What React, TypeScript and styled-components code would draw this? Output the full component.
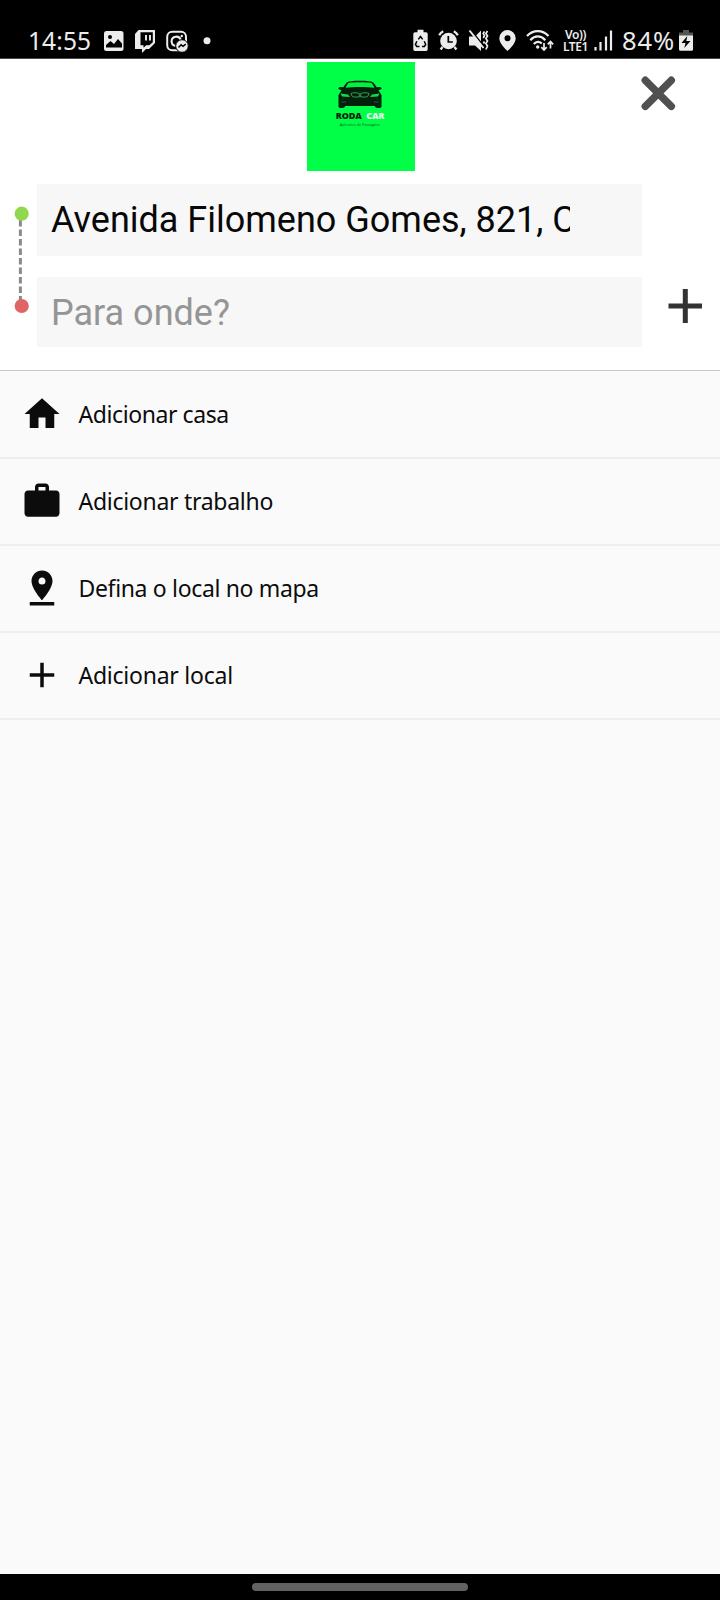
import React from "react";
import styled, { createGlobalStyle } from "styled-components";
import { MdAdd, MdHome, MdPinDrop, MdWork } from "react-icons/md";

const GlobalStyle = createGlobalStyle`
  * { box-sizing: border-box; }
  body { margin: 0; background: #fafafa; }
`;

const Screen = styled.div`
  width: 720px;
  height: 1600px;
  display: flex;
  flex-direction: column;
  overflow: hidden;
  background: #fafafa;
  font-family: "Noto Sans", sans-serif;
`;

const StatusBar = styled.header`
  height: 59px;
  flex: none;
  display: flex;
  align-items: flex-start;
  justify-content: space-between;
  padding: 29px 27px 0 28px;
  border-bottom: 1px solid #4a4a4a;
  background: #000;
  color: #ececec;
`;

const StatusGroup = styled.div`
  display: flex;
  height: 24px;
`;

const StatusText = styled.span<{ $size: number; $width: number; $spacing?: number; $inset?: number }>`
  width: ${(p) => p.$width}px;
  padding-left: ${(p) => p.$inset ?? 0}px;
  font-size: ${(p) => p.$size}px;
  line-height: 23px;
  letter-spacing: ${(p) => p.$spacing ?? 0}px;
  white-space: nowrap;
`;

const StatusGlyph = styled.svg<{ $gap?: number }>`
  display: block;
  flex: none;
  height: 24px;
  margin-left: ${(p) => p.$gap ?? 0}px;
`;

const Network = styled.div`
  width: 27px;
  margin-left: 8px;
  display: flex;
  flex-direction: column;
  align-items: center;
  font-size: 12px;
  font-weight: 600;
  line-height: 12px;
  letter-spacing: -0.4px;
  white-space: nowrap;
`;

const SearchPanel = styled.section`
  height: 312px;
  flex: none;
  background: #fff;
  border-bottom: 1px solid #c8c8c8;
`;

const BrandRow = styled.div`
  height: 125px;
  display: grid;
  grid-template-columns: 307px 108px 1fr;
  padding-top: 3px;
`;

const Logo = styled.div`
  grid-column: 2;
  height: 109px;
  display: flex;
  flex-direction: column;
  align-items: center;
  padding: 18px 14px 0 12px;
  background: #00ff46;
  font-family: "Open Sans", sans-serif;
`;

const LogoName = styled.div`
  margin-top: 1px;
  font-size: 9px;
  font-weight: 800;
  line-height: 12px;
  letter-spacing: -0.1px;
  white-space: pre;
  color: #04240b;
  span { color: #e4ffe9; }
`;

const LogoTagline = styled.div`
  font-size: 3.6px;
  line-height: 5px;
  white-space: nowrap;
  color: #05651f;
`;

const CloseButton = styled.button`
  justify-self: end;
  width: 36px;
  height: 36px;
  margin: 13px 44px 0 0;
  padding: 0;
  border: 0;
  background: none;
`;

const Trip = styled.div`
  display: grid;
  grid-template-columns: 36.5px 605.5px 1fr;
`;

const Route = styled.div`
  height: 164px;
  svg { display: block; }
`;

const Fields = styled.div`
  display: flex;
  flex-direction: column;
  gap: 21px;
`;

const Field = styled.div<{ $height: number; $placeholder?: boolean }>`
  height: ${(p) => p.$height}px;
  padding: ${(p) => (p.$placeholder ? 1 : 0)}px 0 0 14.5px;
  display: flex;
  align-items: center;
  background: #f7f7f7;
  color: ${(p) => (p.$placeholder ? "#959595" : "#080808")};
  font-family: Roboto, sans-serif;
  font-size: 36px;
  line-height: 44px;
`;

const FieldText = styled.span`
  width: 519px;
  overflow: hidden;
  white-space: nowrap;
`;

const AddStop = styled.button`
  width: 34px;
  height: 34px;
  margin: 105px 0 0 26px;
  padding: 0;
  border: 0;
  background: none;
`;

const Options = styled.nav`
  flex: 1;
  padding-top: 1px;
`;

const Option = styled.div`
  height: 87px;
  display: flex;
  align-items: center;
  padding: 0 0 1px 21px;
  border-bottom: 2px solid #eeeeee;
  color: #0c0c0c;
  font-size: 23px;
  svg { flex: none; }
`;

const OptionLabel = styled.span<{ $spacing: number }>`
  margin-left: 15.5px;
  padding-bottom: 1px;
  letter-spacing: ${(p) => p.$spacing}px;
  line-height: 32px;
  white-space: nowrap;
`;

const NavBar = styled.footer`
  height: 26px;
  flex: none;
  display: flex;
  justify-content: center;
  padding-top: 9px;
  background: #000;
`;

const NavHandle = styled.div`
  width: 216px;
  height: 8px;
  border-radius: 4px;
  background: #626262;
`;

const options = [
  { label: "Adicionar casa", Icon: MdHome, spacing: -0.42 },
  { label: "Adicionar trabalho", Icon: MdWork, spacing: -0.28 },
  { label: "Defina o local no mapa", Icon: MdPinDrop, spacing: -0.34 },
  { label: "Adicionar local", Icon: MdAdd, spacing: -0.24 },
];

function Notifications() {
  return (
    <StatusGroup>
      <StatusText $size={24.5} $width={76} $spacing={0.1}>14:55</StatusText>
      <StatusGlyph width="20" viewBox="0 0 20 24" fill="none">
        <rect x="0" y="2" width="19.5" height="20" rx="2.5" fill="#ececec" />
        <circle cx="6" cy="8" r="2" fill="#000" />
        <path d="M2 18.5V16l4.5-4 3.5 3 4-5 4 4.5v4z" fill="#000" />
      </StatusGlyph>
      <StatusGlyph $gap={11} width="21" viewBox="0 0 21 24">
        <path d="M3.5 1H20v13l-6 6h-3l-4 4v-4H0V5z" fill="#ececec" />
        <path d="M5.5 3.2h12.3v10l-3.5 3h-3.1l-2.7 2.6v-2.6h-3z" fill="#000" />
        <path d="M11 6v5.500M15 6v5.500" stroke="#ececec" strokeWidth="1.900" />
      </StatusGlyph>
      <StatusGlyph $gap={10} width="23" viewBox="0 0 23 24" fill="none" stroke="#ececec">
        <rect x="1.2" y="2.7" width="18.8" height="18.5" rx="5" strokeWidth="2" />
        <path d="M14.8 11a4.7 4.7 0 1 0-5.2 6" strokeWidth="2.1" />
        <circle cx="15.8" cy="7" r="1.2" fill="#ececec" stroke="none" />
        <circle cx="16" cy="17" r="6.3" fill="#ececec" stroke="#000" strokeWidth="1" />
        <path d="M12.5 18.5l2.6-2.7 2 1.5 2.6-2.2" stroke="#000" strokeWidth="1.5" />
      </StatusGlyph>
      <StatusGlyph $gap={14} width="8" viewBox="0 0 8 24">
        <circle cx="4" cy="11.700" r="3.500" fill="#ececec" />
      </StatusGlyph>
    </StatusGroup>
  );
}

function SystemStatus() {
  return (
    <StatusGroup>
      <StatusGlyph width="15" viewBox="0 0 15 24">
        <path d="M4.500.8h6v2.400H13a1.700 1.700 0 0 1 1.700 1.700v15.300A1.700 1.700 0 0 1 13 22H2A1.700 1.700 0 0 1 .3 20.200V4.900A1.700 1.700 0 0 1 2 3.200h2.500z" fill="#ececec" />
        <path d="M5.300 10.400 7.500 7.500l2.200 2.900M11.200 12.200l1.500 3.200-1.300 2H9M6.500 17.400H3.700l-1.300-2 1.500-3.200" fill="none" stroke="#000" strokeWidth="1.500" />
      </StatusGlyph>
      <StatusGlyph $gap={10} width="21" viewBox="0 0 21 24" fill="none" stroke="#ececec">
        <circle cx="10.500" cy="12" r="8.300" fill="#ececec" stroke="none" />
        <path d="M1.200 6.300a9 9 0 0 1 4-4M19.800 6.300a9 9 0 0 0-4-4M4.500 18 2.600 20.500M16.500 18l1.900 2.500" strokeWidth="2.300" />
        <path d="M10.300 7v6h4.500" stroke="#000" strokeWidth="1.700" />
      </StatusGlyph>
      <StatusGlyph $gap={9} width="21" viewBox="0 0 21 24" fill="none">
        <path d="M1 7.500h6l6-6V22L7 16.500H1z" fill="#ececec" />
        <path d="M3.200 1.500 17.200 19" stroke="#000" strokeWidth="1.700" />
        <path d="M1.500 1.500 15.500 19" stroke="#ececec" strokeWidth="2" />
        <path d="M16.500 2.500l-1.300 2 1.300 2.300-1.300 2.200M19.500 2l-1.600 2.500 1.600 2.500-1.600 2.500 1.600 2.500-1.600 2.500 1.600 2.500-1.600 3.500M16.500 12.500l-1 2" stroke="#ececec" strokeWidth="1.700" />
      </StatusGlyph>
      <StatusGlyph $gap={10} width="17" viewBox="0 0 17 24">
        <path fillRule="evenodd" d="M8.500 1A8.200 8.200 0 0 0 .3 9.200C.3 15 8.500 22 8.500 22S16.700 15 16.700 9.200A8.200 8.200 0 0 0 8.500 1zm0 5.200a3 3 0 1 1 0 6 3 3 0 0 1 0-6z" fill="#ececec" />
      </StatusGlyph>
      <StatusGlyph $gap={10} width="28" viewBox="0 0 28 24" fill="none" stroke="#ececec">
        <path d="M1 7c6-6.500 15.500-6.500 21.500 0M4.300 11.200c4.500-5 10.500-5 15 0M7.800 15c2.500-2.800 5.500-2.800 8-.5" strokeWidth="2.200" />
        <circle cx="11.700" cy="18" r="1.700" fill="#ececec" stroke="none" />
        <path d="M18 14v7m-2.700-2.800 2.700 2.800 2.700-2.800M24.500 19.500v-7m-2.700 2.800 2.700-2.800 2.700 2.800" strokeWidth="1.700" />
      </StatusGlyph>
      <Network>
        <span>Vo))</span>
        <span>LTE1</span>
      </Network>
      <StatusGlyph $gap={5} width="20" viewBox="0 0 20 24" stroke="#ececec">
        <path d="M1.500 18v3.500M6.500 13v8.500M12 7.500v14M17 1.500v20" strokeWidth="2.200" />
      </StatusGlyph>
      <StatusText $size={25.5} $width={65} $spacing={0.9} $inset={8}>84%</StatusText>
      <StatusGlyph width="14" viewBox="0 0 14 24">
        <path d="M4 1h6v2.500h4V7H0V3.500h4z" fill="#555" />
        <path d="M0 6.500h14v13.700a1.500 1.500 0 0 1-1.500 1.500h-11A1.500 1.500 0 0 1 0 20.200z" fill="#ececec" />
        <path d="M8.300 7 2.500 14h4l-1.200 5L11.500 12H7.300z" fill="#000" />
      </StatusGlyph>
    </StatusGroup>
  );
}

function Car() {
  return (
    <svg width="46" height="29" viewBox="0 0 46 29">
      <path d="M1.500 9c-.5-2 2.500-2.500 4.500-1.500L9.500 2.800C11 1.200 16 .8 23 .8s12 .4 13.500 2L40 7.500c2-1 5-.5 4.500 1.500l-3 1.200 3 4.800v11.500c0 2-6 2-6.500 0v-.5H8v.5c-.5 2-6.500 2-6.500 0V15l3-4.800z" fill="#03200a" />
      <path d="M11 3.200c3-1.200 21-1.200 24 0l2.500 4.500c-9-1-20-1-29 0z" fill="#00f044" />
      <path d="M3.500 13.500l7.500 1 2 2.500-8-.5zM42.500 13.500l-7.500 1-2 2.500 8-.5z" fill="#18d653" />
      <path d="M14 13.500c2-1 6-1 8.300 0v3.500h-5c-2 0-3-1.500-3.300-3.500zM32 13.500c-2-1-6-1-8.300 0v3.500h5c2 0 3-1.500 3.300-3.500z" fill="none" stroke="#41ba64" strokeWidth=".8" />
      <path d="M4 22h5M37 22h5" stroke="#0a792a" strokeWidth=".8" />
    </svg>
  );
}

export default function App() {
  return (
    <Screen>
      <GlobalStyle />
      <StatusBar>
        <Notifications />
        <SystemStatus />
      </StatusBar>
      <SearchPanel>
        <BrandRow>
          <Logo>
            <Car />
            <LogoName>RODA <span> CAR</span></LogoName>
            <LogoTagline>Aplicativo de Passageiro</LogoTagline>
          </Logo>
          <CloseButton aria-label="Fechar">
            <svg width="36" height="36" viewBox="0 0 36 36">
              <path d="M5.300 5.300 31.300 31.300M31.300 5.300 5.300 31.300" stroke="#505050" strokeWidth="7.500" strokeLinecap="round" />
            </svg>
          </CloseButton>
        </BrandRow>
        <Trip>
          <Route>
            <svg width="36" height="164" viewBox="0 0 36 164">
              <path d="M20.400 36V116" stroke="#8a8a8a" strokeWidth="3" strokeDasharray="6.500 3" />
              <circle cx="21.700" cy="29.700" r="7.100" fill="#92d750" />
              <circle cx="21.700" cy="122" r="7.100" fill="#e06666" />
            </svg>
          </Route>
          <Fields>
            <Field $height={72}>
              <FieldText>Avenida Filomeno Gomes, 821, Centro</FieldText>
            </Field>
            <Field $height={70} $placeholder>
              <FieldText>Para onde?</FieldText>
            </Field>
          </Fields>
          <AddStop aria-label="Adicionar parada">
            <svg width="34" height="34" viewBox="0 0 34 34">
              <path d="M17.300 0v34M.5 17H34" stroke="#333" strokeWidth="5" />
            </svg>
          </AddStop>
        </Trip>
      </SearchPanel>
      <Options>
        {options.map(({ label, Icon, spacing }) => (
          <Option key={label}>
            <Icon size={42} />
            <OptionLabel $spacing={spacing}>{label}</OptionLabel>
          </Option>
        ))}
      </Options>
      <NavBar>
        <NavHandle />
      </NavBar>
    </Screen>
  );
}
